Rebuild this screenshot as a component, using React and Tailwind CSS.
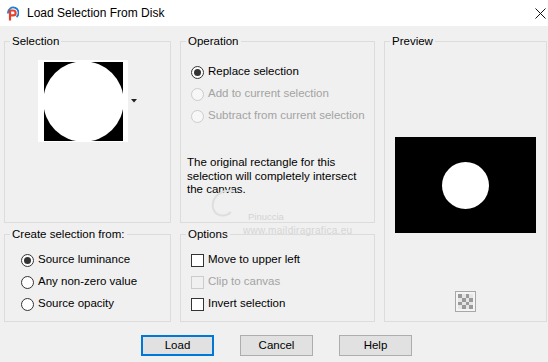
import React from 'react';

const Radio = ({ checked, disabled, children }) => (
  <div className="flex items-center h-[22px] whitespace-nowrap">
    <span
      className={`w-[13px] h-[13px] shrink-0 rounded-full border flex items-center justify-center ${
        disabled ? 'border-[#cccccc] bg-[#f7f7f7]' : 'border-[#333333] bg-white'
      }`}
    >
      {checked && <span className="w-[7px] h-[7px] rounded-full bg-[#333333]" />}
    </span>
    <span className={`ml-[4px] ${disabled ? 'text-[#a3a3a3]' : 'text-black'}`}>{children}</span>
  </div>
);

const Check = ({ disabled, children }) => (
  <div className="flex items-center h-[22px] whitespace-nowrap">
    <span
      className={`w-[13px] h-[13px] shrink-0 border ${
        disabled ? 'border-[#cccccc] bg-[#f0f0f0]' : 'border-[#333333] bg-white'
      }`}
    />
    <span className={`ml-[4px] ${disabled ? 'text-[#a3a3a3]' : 'text-black'}`}>{children}</span>
  </div>
);

const Group = ({ title, className = '', children }) => (
  <fieldset className={`border border-[#dcdcdc] min-w-0 ${className}`}>
    <legend className="ml-[5px] px-[2px] leading-[14px] text-black">{title}</legend>
    {children}
  </fieldset>
);

const Button = ({ primary, children }) => (
  <button
    type="button"
    className={`w-[73px] h-[21px] bg-[#e1e1e1] flex items-center justify-center text-black ${
      primary ? 'border-2 border-[#0078d7]' : 'border border-[#adadad]'
    }`}
  >
    {children}
  </button>
);

const App = () => {
  return (
    <div className="w-[548px] h-[362px] bg-[#f0f0f0] font-['Liberation_Sans',Arial,sans-serif] text-[11.5px] text-black overflow-hidden">
      {/* Title bar */}
      <div className="h-[26px] bg-white flex items-center">
        <svg width="13" height="16" viewBox="0 0 13 16" className="ml-[6px]">
          <path d="M2 8.5 A5.3 5.3 0 1 1 10.5 12" stroke="#1d7fd6" strokeWidth="1.8" fill="none" />
          <path d="M4 15.5 V5.5 H7.2 a2.4 2.4 0 0 1 0 4.8 H4.5" stroke="#e5412f" strokeWidth="2.2" fill="none" />
        </svg>
        <span className="ml-[8px] text-[12px] leading-none">Load Selection From Disk</span>
        <svg width="11" height="11" viewBox="0 0 11 11" className="ml-auto mr-[2px]">
          <path d="M0.5 0.5 L10.5 10.5 M10.5 0.5 L0.5 10.5" stroke="#111" strokeWidth="1" />
        </svg>
      </div>

      {/* Groups */}
      <div className="pt-[8px] pl-[4px] grid grid-cols-[167px_195px_163px] grid-rows-[189px_95px] gap-x-[9px] gap-y-[4px]">
        <Group title="Selection">
          <div className="flex items-center mt-[12px] ml-[33px]">
            <div className="w-[90px] h-[82px] bg-white pl-[6px] pt-[2px]">
              <svg width="79" height="79" viewBox="0 0 79 79" className="block">
                <rect width="79" height="79" fill="#000" />
                <circle cx="39.5" cy="39.5" r="40.2" fill="#fff" />
              </svg>
            </div>
            <svg width="6" height="4" viewBox="0 0 6 4" className="ml-[3px]">
              <path d="M0 0 H6 L3 3.5 Z" fill="#222" />
            </svg>
          </div>
        </Group>

        <Group title="Operation" className="relative">
          <div className="pl-[10px] mt-[13px]">
            <Radio checked>Replace selection</Radio>
            <Radio disabled>Add to current selection</Radio>
            <Radio disabled>Subtract from current selection</Radio>
          </div>
          <p className="pl-[6px] mt-[29px] leading-[13.5px] whitespace-nowrap">
            The original rectangle for this
            <br />
            selection will completely intersect
            <br />
            the canvas.
          </p>
          {/* watermark */}
          <svg width="40" height="40" viewBox="0 0 40 40" className="absolute left-[24px] top-[136px]">
            <path d="M30 8 C18 4 6 12 8 24 C10 32 20 34 26 28" stroke="#dedede" strokeWidth="2" fill="none" />
          </svg>
          <span className="absolute left-[67px] top-[164px] text-[9.5px] leading-none text-[#d3d3d3]">Pinuccia</span>
          <span className="absolute left-[62px] top-[178px] text-[10px] leading-none text-[#d5d5d5] tracking-[0.3px]">
            www.maildiragrafica.eu
          </span>
        </Group>

        <Group title="Preview" className="row-span-2">
          <div className="flex flex-col items-center">
            <div className="mt-[89px] w-[141px] h-[96px] bg-black flex items-center justify-center">
              <div className="w-[47px] h-[47px] rounded-full bg-white" />
            </div>
            <div className="mt-[58px] w-[21px] h-[21px] border border-[#a8a8a8] bg-[#f4f4f4] p-[2px]">
              <div className="grid grid-cols-4 grid-rows-4 w-full h-full">
                {Array.from({ length: 16 }).map((_, i) => (
                  <div
                    key={i}
                    className={(Math.floor(i / 4) + i) % 2 === 0 ? 'bg-[#9a9a9a]' : 'bg-[#e6e6e6]'}
                  />
                ))}
              </div>
            </div>
          </div>
        </Group>

        <Group title="Create selection from:">
          <div className="pl-[16px] mt-[8px]">
            <Radio checked>Source luminance</Radio>
            <Radio>Any non-zero value</Radio>
            <Radio>Source opacity</Radio>
          </div>
        </Group>

        <Group title="Options">
          <div className="pl-[10px] mt-[8px]">
            <Check>Move to upper left</Check>
            <Check disabled>Clip to canvas</Check>
            <Check>Invert selection</Check>
          </div>
        </Group>
      </div>

      {/* Buttons */}
      <div className="flex mt-[13px] pl-[141px] gap-[26px]">
        <Button primary>Load</Button>
        <Button>Cancel</Button>
        <Button>Help</Button>
      </div>
    </div>
  );
};

export default App;
